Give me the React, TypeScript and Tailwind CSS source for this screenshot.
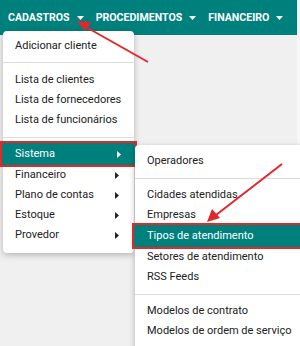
import React from "react";

const font = { fontFamily: "Roboto, 'Liberation Sans', sans-serif" };

function DownCaret() {
  return (
    <svg width="7" height="4" viewBox="0 0 7 4" className="ml-[7px] mt-[1px]">
      <path d="M0 0 L7 0 L3.5 4 Z" fill="white" />
    </svg>
  );
}

function RightCaret({ white }: { white?: boolean }) {
  return (
    <svg width="4" height="7" viewBox="0 0 4 7">
      <path d="M0 0 L4 3.5 L0 7 Z" fill={white ? "white" : "#222"} />
    </svg>
  );
}

function Item({ label, sub, active }: { label: string; sub?: boolean; active?: boolean }) {
  if (active) {
    return (
      <div className="-mx-[1px] flex h-[22px] items-center justify-between whitespace-nowrap bg-[#00807c] pl-[13px] pr-[14px] text-white outline outline-2 outline-[#e02a2a]">
        <span>{label}</span>
        {sub && <RightCaret white />}
      </div>
    );
  }
  return (
    <div className="flex h-[20px] items-center justify-between whitespace-nowrap pl-[12px] pr-[15px]">
      <span>{label}</span>
      {sub && <RightCaret />}
    </div>
  );
}

function Sep({ top, bottom }: { top: string; bottom: string }) {
  return <div className={`${top} ${bottom} h-px bg-[#dcdcdc]`} />;
}

export default function App() {
  return (
    <div className="relative h-[346px] w-[300px] overflow-hidden bg-[#f7f7f7] text-[11px] text-[#212121]" style={font}>
      <div className="h-[346px] w-[297px] bg-[#f0f0f0]">
        <div className="flex h-[35px] items-center whitespace-nowrap bg-[#00807c] pl-[8px] text-[10.6px] font-bold text-white">
          <div className="flex items-center">CADASTROS<DownCaret /></div>
          <div className="ml-[12px] flex items-center">PROCEDIMENTOS<DownCaret /></div>
          <div className="ml-[12px] flex items-center">FINANCEIRO<DownCaret /></div>
        </div>
      </div>

      {/* dropdown 1 */}
      <div className="absolute left-[3px] top-[31px] w-[131px] rounded-[4px] bg-white pt-[5px] pb-[8px] shadow-[0_2px_6px_rgba(0,0,0,0.25)]">
        <Item label="Adicionar cliente" />
        <Sep top="mt-[6px]" bottom="mb-[7px]" />
        <Item label="Lista de clientes" />
        <Item label="Lista de fornecedores" />
        <Item label="Lista de funcionários" />
        <Sep top="mt-[7px]" bottom="mb-[5px]" />
        <Item label="Sistema" sub active />
        <Item label="Financeiro" sub />
        <Item label="Plano de contas" sub />
        <Item label="Estoque" sub />
        <Item label="Provedor" sub />
      </div>

      {/* dropdown 2 */}
      <div className="absolute left-[135px] top-[145px] h-[220px] w-[180px] rounded-[4px] bg-white pt-[6px] shadow-[0_2px_6px_rgba(0,0,0,0.25)]">
        <Item label="Operadores" />
        <Sep top="mt-[7px]" bottom="mb-[6px]" />
        <Item label="Cidades atendidas" />
        <Item label="Empresas" />
        <Item label="Tipos de atendimento" active />
        <Item label="Setores de atendimento" />
        <Item label="RSS Feeds" />
        <Sep top="mt-[7px]" bottom="mb-[6px]" />
        <Item label="Modelos de contrato" />
        <Item label="Modelos de ordem de serviço" />
      </div>

      {/* arrows */}
      <svg className="pointer-events-none absolute left-0 top-0" width="300" height="346" viewBox="0 0 300 346">
        <line x1="148" y1="62" x2="86" y2="27" stroke="#e3262b" strokeWidth="2" />
        <path d="M77 21 L91 22 L85 31 Z" fill="#e3262b" />
        <line x1="282" y1="164" x2="216" y2="215" stroke="#e3262b" strokeWidth="2" />
        <path d="M207 222 L212 209 L220 218 Z" fill="#e3262b" />
      </svg>
    </div>
  );
}
